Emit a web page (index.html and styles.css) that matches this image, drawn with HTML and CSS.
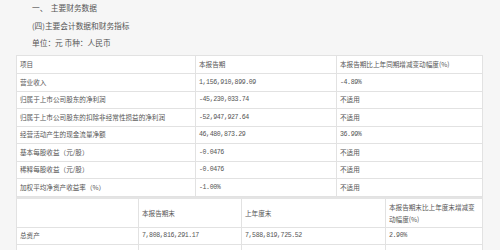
FILE: index.html
```html
<!DOCTYPE html>
<html lang="zh-CN">
<head>
<meta charset="utf-8">
<title>主要财务数据</title>
<link rel="stylesheet" href="styles.css">
</head>
<body>
<div class="page">
  <div class="intro">
    <p class="line">一、&nbsp;&nbsp;主要财务数据</p>
    <p class="line">(四)主要会计数据和财务指标</p>
    <p class="line">单位：元&nbsp;币种：人民币</p>
  </div>
  <table class="fin t1">
    <colgroup><col class="c1"><col class="c2"><col class="c3"></colgroup>
    <tr class="head"><td>项目</td><td>本报告期</td><td>本报告期比上年同期增减变动幅度(%)</td></tr>
    <tr><td>营业收入</td><td class="num">1,156,910,899.09</td><td class="num">-4.89%</td></tr>
    <tr><td>归属于上市公司股东的净利润</td><td class="num">-45,230,033.74</td><td>不适用</td></tr>
    <tr><td>归属于上市公司股东的扣除非经常性损益的净利润</td><td class="num">-52,947,927.64</td><td>不适用</td></tr>
    <tr><td>经营活动产生的现金流量净额</td><td class="num">46,480,873.29</td><td class="num">36.99%</td></tr>
    <tr><td>基本每股收益（元/股）</td><td class="num">-0.0476</td><td>不适用</td></tr>
    <tr><td>稀释每股收益（元/股）</td><td class="num">-0.0476</td><td>不适用</td></tr>
    <tr><td>加权平均净资产收益率（%）</td><td class="num">-1.00%</td><td>不适用</td></tr>
  </table>
  <table class="fin t2">
    <colgroup><col class="d1"><col class="d2"><col class="d3"><col class="d4"></colgroup>
    <tr class="head2"><td></td><td>本报告期末</td><td>上年度末</td><td>本报告期末比上年度末增减变动幅度(%)</td></tr>
    <tr><td>总资产</td><td class="num">7,808,816,291.17</td><td class="num">7,588,819,725.52</td><td class="num">2.90%</td></tr>
    <tr><td></td><td></td><td></td><td></td></tr>
  </table>
</div>
</body>
</html>
```
FILE: styles.css
```css
html, body {
  margin: 0;
  padding: 0;
  background: #f6f6f6;
}
body {
  font-family: "Noto Sans CJK SC", "Noto Sans", sans-serif;
  color: #555;
  width: 500px;
  height: 250px;
  overflow: hidden;
}
.intro {
  padding-left: 32px;
  margin-top: -1px;
}
.line {
  margin: 0;
  font-size: 7.7px;
  line-height: 17.5px;
  height: 17.5px;
  white-space: nowrap;
}
.fin {
  margin-left: 16px;
  width: 467px;
  border-collapse: collapse;
  background: #fff;
  table-layout: fixed;
  font-size: 6.6px;
}
.fin td {
  border: 1px solid #e2e2e2;
  padding: 0 2px 0 3px;
  height: 16.5px;
  line-height: 9px;
  vertical-align: middle;
  white-space: nowrap;
  overflow: hidden;
}
.t1 {
  margin-top: 3.5px;
}
.t1 .head td {
  height: 17px;
}
.c1 { width: 179px; }
.c2 { width: 141px; }
.d1 { width: 122px; }
.d2 { width: 103px; }
.d3 { width: 144px; }
.t2 {
  border-top: 2px solid #e4e4e4;
}
.t2 .head2 td {
  height: 28px;
  white-space: normal;
  line-height: 12px;
}
.num {
  font-family: "Liberation Mono", monospace;
  letter-spacing: -0.4px;
}
```
